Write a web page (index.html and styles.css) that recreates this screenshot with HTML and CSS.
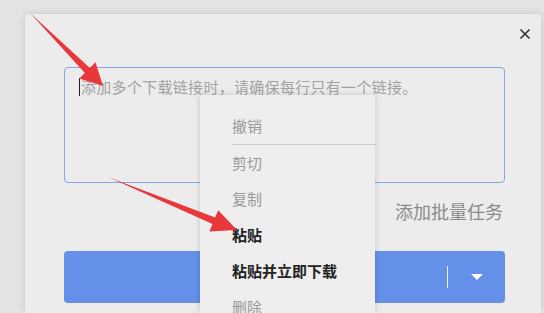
FILE: index.html
```html
<!DOCTYPE html>
<html lang="zh-CN">
<head>
  <meta charset="UTF-8" />
  <meta name="viewport" content="width=device-width, initial-scale=1" />
  <title>添加批量任务</title>
  <link rel="stylesheet" href="styles.css">
</head>
<body>
  <div class="dialog">
    <button class="close-btn" aria-label="关闭">
      <svg width="12" height="12" viewBox="0 0 12 12">
        <path d="M1.5 1.5 L10.5 10.5 M10.5 1.5 L1.5 10.5" stroke="#333" stroke-width="1.6" fill="none"/>
      </svg>
    </button>

    <div class="link-box">
      <span class="caret"></span><span class="placeholder">添加多个下载链接时，请确保每行只有一个链接。</span>
    </div>

    <div class="batch-link">添加批量任务</div>

    <div class="download-btn">
      <span class="btn-divider"></span>
      <span class="btn-more"><span class="tri"></span></span>
    </div>
  </div>

  <!-- context menu over the dialog -->
  <ul class="context-menu">
    <li class="disabled">撤销</li>
    <li class="sep"></li>
    <li class="disabled">剪切</li>
    <li class="disabled">复制</li>
    <li class="active">粘贴</li>
    <li class="active">粘贴并立即下载</li>
    <li class="disabled">删除</li>
  </ul>

  <!-- red annotation arrows -->
  <svg class="arrows" width="544" height="313" viewBox="0 0 544 313">
    <polygon points="30,13 89.9,67.9 95.5,62.3 103,86 79.3,78.5 84.9,72.9" fill="#e8383a"/>
    <polygon points="108,177 215.1,217.6 218.2,210.2 237,230 209.4,231.4 212.5,224" fill="#e8383a"/>
  </svg>
</body>
</html>
```

FILE: styles.css
```css
body {
  margin: 0;
  width: 544px;
  height: 313px;
  overflow: hidden;
  background: #e3e3e3;
  font-family: "Noto Sans CJK SC", "Noto Sans", sans-serif;
  position: relative;
}
.dialog {
  position: relative;
  margin: 14px 3px 0 25px;
  height: 299px;
  box-sizing: border-box;
  padding: 53px 36px 0 39px;
  background: #ececec;
  border-radius: 4px 4px 0 0;
  box-shadow: 0 0 7px rgba(0,0,0,0.13);
}
.close-btn {
  position: absolute;
  top: 14px;
  right: 10px;
  width: 12px;
  height: 12px;
  padding: 0;
  border: none;
  background: none;
  display: flex;
}
.link-box {
  height: 116px;
  box-sizing: border-box;
  border: 1px solid #86a6ea;
  border-radius: 4px;
  padding: 9px 14px;
  display: flex;
  align-items: center;
  align-content: flex-start;
  flex-wrap: wrap;
  line-height: 20px;
  font-size: 15px;
  letter-spacing: 0.3px;
}
.caret {
  width: 1px;
  height: 18px;
  background: #222;
  margin-right: 1px;
}
.placeholder {
  color: #a2a2a2;
}
.batch-link {
  margin-top: 16px;
  text-align: right;
  padding-right: 2px;
  font-size: 18px;
  line-height: 24px;
  color: #8a8a8a;
}
.download-btn {
  margin-top: 28px;
  height: 52px;
  background: #6490ea;
  border-radius: 4px;
  display: flex;
  justify-content: flex-end;
  align-items: center;
}
.btn-divider {
  width: 1px;
  height: 22px;
  background: rgba(255,255,255,0.85);
}
.btn-more {
  width: 57px;
  display: flex;
  justify-content: center;
}
.tri {
  width: 0;
  height: 0;
  border-left: 6px solid transparent;
  border-right: 6px solid transparent;
  border-top: 6px solid #fff;
}
.context-menu {
  position: absolute;
  left: 200px;
  top: 95px;
  width: 175px;
  height: 218px;
  margin: 0;
  padding: 13px 0 0 32px;
  box-sizing: border-box;
  overflow: hidden;
  list-style: none;
  background: #eeeeee;
  box-shadow: 0 0 6px rgba(0,0,0,0.16);
  font-size: 15px;
}
.context-menu li {
  height: 36px;
  line-height: 36px;
  white-space: nowrap;
}
.context-menu li.sep {
  height: 1px;
  background: #c6cad2;
}
.context-menu li.disabled {
  color: #999;
}
.context-menu li.active {
  color: #222;
  font-weight: 600;
}
.arrows {
  position: absolute;
  left: 0;
  top: 0;
  pointer-events: none;
}
```
